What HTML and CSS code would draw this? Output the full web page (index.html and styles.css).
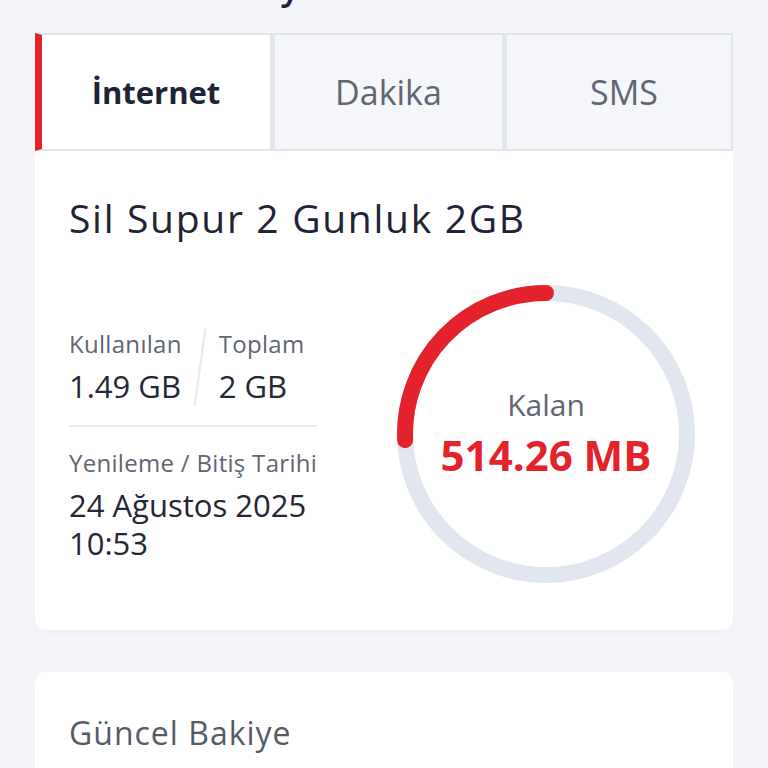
FILE: index.html
```html
<!DOCTYPE html>
<html lang="tr">
<head>
    <meta charset="UTF-8">
    <meta name="viewport" content="width=device-width, initial-scale=1.0">
    <title>Kullanım Detayı</title>
    <link rel="stylesheet" href="styles.css">
</head>
<body>
    <main class="page">
        <h2 class="section-title">Kullanım Detayı</h2>

        <div class="tabs">
            <div class="tab active">İnternet</div>
            <div class="tab">Dakika</div>
            <div class="tab">SMS</div>
        </div>

        <section class="card usage-card">
            <h3 class="package-name">Sil Supur 2 Gunluk 2GB</h3>
            <div class="usage">
                <div class="details">
                    <div class="pair">
                        <div class="stat">
                            <span class="label">Kullanılan</span>
                            <span class="value">1.49 GB</span>
                        </div>
                        <span class="slash"></span>
                        <div class="stat">
                            <span class="label">Toplam</span>
                            <span class="value">2 GB</span>
                        </div>
                    </div>
                    <div class="renew">
                        <span class="label">Yenileme / Bitiş Tarihi</span>
                        <span class="value date">24 Ağustos 2025</span>
                        <span class="value">10:53</span>
                    </div>
                </div>
                <div class="ring">
                    <svg width="300" height="300" viewBox="0 0 300 300">
                        <circle cx="150" cy="150" r="141" fill="none" stroke="#e1e5ee" stroke-width="16"/>
                        <path d="M150 9 A141 141 0 0 0 9.13 156.15" fill="none" stroke="#e3222b" stroke-width="16" stroke-linecap="round"/>
                    </svg>
                    <div class="ring-text">
                        <span class="ring-label">Kalan</span>
                        <span class="ring-value">514.26 MB</span>
                    </div>
                </div>
            </div>
        </section>

        <section class="card balance-card">
            <h3 class="balance-title">Güncel Bakiye</h3>
        </section>
    </main>
</body>
</html>
```

FILE: styles.css
```css
body {
    margin: 0;
    background-color: #f4f5f8;
    font-family: "Open Sans", Lato, sans-serif;
    color: #1f2336;
}
.page {
    padding: 0 35px;
}
.section-title {
    margin: -34px 0 27px 0;
    font-size: 36px;
    line-height: 40px;
    font-weight: 600;
}
.tabs {
    display: grid;
    grid-template-columns: 237px 232px 1fr;
}
.tab {
    height: 114px;
    display: flex;
    align-items: center;
    justify-content: center;
    background: #f5f6f9;
    border: 2px solid #e1e4eb;
    font-size: 34px;
    color: #5f6572;
}
.tab + .tab {
    border-left-width: 3px;
}
.tab:last-child {
    padding-left: 10px;
}
.tab.active {
    background: #fff;
    border-left: 7px solid #e3222b;
    color: #1f2336;
    font-size: 31px;
    font-weight: 700;
}
.card {
    background: #fff;
    box-shadow: 0 2px 6px rgba(0, 0, 0, 0.03);
}
.usage-card {
    border-radius: 0 0 10px 10px;
    padding: 40px 37px 46px 34px;
}
.package-name {
    margin: 0;
    font-size: 39px;
    line-height: 54px;
    font-weight: 500;
    letter-spacing: 1.7px;
}
.usage {
    display: flex;
    justify-content: space-between;
    align-items: flex-start;
    margin-top: 39px;
}
.details {
    width: 248px;
    margin-top: 44px;
}
.pair {
    display: flex;
    align-items: center;
    padding-bottom: 19px;
    border-bottom: 2px solid #e6e8ed;
}
.stat {
    display: flex;
    flex-direction: column;
}
.label {
    font-size: 24px;
    line-height: 30px;
    letter-spacing: 0.3px;
    white-space: nowrap;
    color: #5f6672;
}
.value {
    font-size: 31px;
    line-height: 38px;
    white-space: nowrap;
    color: #232736;
}
.stat .value {
    margin-top: 8px;
}
.slash {
    width: 2px;
    height: 78px;
    background: #e6e8ed;
    transform: rotate(8deg);
    margin: 0 18px 0 17px;
}
.renew {
    display: flex;
    flex-direction: column;
    margin-top: 21px;
}
.renew .date {
    margin-top: 8px;
}
.ring {
    position: relative;
    width: 300px;
    height: 300px;
}
.ring svg {
    display: block;
}
.ring-text {
    position: absolute;
    left: 0;
    right: 0;
    top: 103px;
    display: flex;
    flex-direction: column;
    align-items: center;
}
.ring-label {
    font-size: 30px;
    line-height: 36px;
    color: #5f6672;
}
.ring-value {
    margin-top: 7px;
    font-size: 42px;
    line-height: 50px;
    font-weight: 700;
    color: #e3222b;
}
.balance-card {
    margin-top: 42px;
    border-radius: 10px 10px 0 0;
    padding: 41px 34px;
    height: 200px;
}
.balance-title {
    margin: 0;
    font-size: 32px;
    line-height: 40px;
    font-weight: 400;
    letter-spacing: 1px;
    color: #555b66;
}
```
